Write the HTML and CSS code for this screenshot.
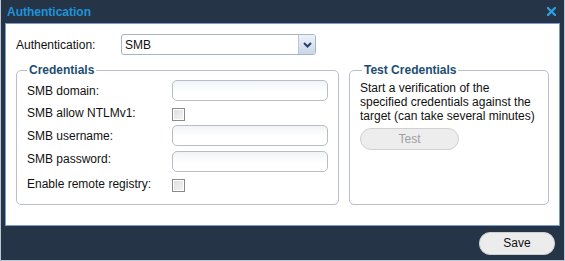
FILE: index.html
```html
<!DOCTYPE html>
<html lang="en">
<head>
    <meta charset="UTF-8">
    <title>Authentication</title>
    <link rel="stylesheet" href="styles.css">
</head>
<body>
    <div class="dialog">
        <div class="title-bar">
            <span class="title">Authentication</span>
            <svg class="close" width="9" height="9" viewBox="0 0 9 9">
                <path d="M1 1 L8 8 M8 1 L1 8" stroke="#2c9ee0" stroke-width="2.3" stroke-linecap="square"/>
            </svg>
        </div>

        <div class="content">
            <div class="auth-row">
                <span class="label">Authentication:</span>
                <div class="select">
                    <span class="select-value">SMB</span>
                    <span class="select-arrow">
                        <svg width="9" height="6" viewBox="0 0 9 6">
                            <path d="M1 1 L4.5 4.5 L8 1" stroke="#28406a" stroke-width="2" fill="none"/>
                        </svg>
                    </span>
                </div>
            </div>

            <div class="groups">
                <fieldset class="group credentials">
                    <legend>Credentials</legend>
                    <div class="form-grid">
                        <span class="label">SMB domain:</span>
                        <span class="input"></span>

                        <span class="label">SMB allow NTLMv1:</span>
                        <span class="checkbox"></span>

                        <span class="label">SMB username:</span>
                        <span class="input"></span>

                        <span class="label">SMB password:</span>
                        <span class="input"></span>

                        <span class="label">Enable remote registry:</span>
                        <span class="checkbox"></span>
                    </div>
                </fieldset>

                <fieldset class="group test">
                    <legend>Test Credentials</legend>
                    <p class="test-text">Start a verification of the specified credentials against the target (can take several minutes)</p>
                    <button class="btn btn-disabled" disabled>Test</button>
                </fieldset>
            </div>
        </div>

        <div class="footer">
            <button class="btn btn-save">Save</button>
        </div>
    </div>
</body>
</html>
```

FILE: styles.css
```css
body {
    margin: 0;
    font-family: 'Liberation Sans', Arial, sans-serif;
    font-size: 12px;
    color: #111;
}

.dialog {
    width: 565px;
    height: 261px;
    box-sizing: border-box;
    background: #253547;
    border: 1px solid #bcc6d2;
    border-top: none;
    display: flex;
    flex-direction: column;
}

.title-bar {
    height: 23px;
    display: flex;
    align-items: center;
    justify-content: space-between;
    padding: 0 8px 0 6px;
}

.title {
    font-weight: bold;
    font-size: 12px;
    color: #1e93da;
}

.close {
    display: block;
}

.content {
    background: #fff;
    border: 1px solid #7a9ccc;
    margin: 0 4px;
    height: 203px;
    box-sizing: border-box;
    padding: 10px 9px 0 10px;
}

.auth-row {
    display: flex;
    align-items: center;
    height: 21px;
}

.auth-row .label {
    width: 105px;
}

.select {
    width: 195px;
    height: 21px;
    box-sizing: border-box;
    border: 1px solid #a7b4c8;
    border-radius: 3px;
    display: flex;
    align-items: center;
    justify-content: space-between;
    background: #fff;
}

.select-value {
    padding-left: 3px;
}

.select-arrow {
    width: 16px;
    height: 19px;
    display: flex;
    align-items: center;
    justify-content: center;
    border-left: 1px solid #b8c6da;
    background: linear-gradient(#eef3f9, #c9d6e8);
    border-radius: 0 2px 2px 0;
}

.groups {
    display: flex;
    gap: 10px;
    margin-top: 8px;
}

.group {
    margin: 0;
    border: 1px solid #b9bdcc;
    border-radius: 5px;
    box-sizing: border-box;
    height: 142px;
}

.group legend {
    font-weight: bold;
    color: #1c4d72;
    padding: 0 2px;
}

.credentials {
    width: 323px;
    padding: 3px 10px 0 10px;
}

.test {
    width: 200px;
    padding: 4px 8px 0 10px;
}

.test legend {
    margin-left: 2px;
}

.form-grid {
    display: grid;
    grid-template-columns: 145px 156px;
    grid-template-rows: 21px 24px 21px 26px 24px;
    align-items: center;
}

.input {
    align-self: end;
    height: 21px;
    box-sizing: border-box;
    border: 1px solid #b8bcc9;
    border-radius: 5px;
    background: linear-gradient(#f1f4f6, #fff 60%);
}

.checkbox {
    width: 13px;
    height: 13px;
    box-sizing: border-box;
    border: 1px solid #8a8a8a;
    background: linear-gradient(135deg, #dcdcdc, #f6f6f6);
    box-shadow: inset 0 0 0 1px #fff;
    margin-top: 3px;
}

.test-text {
    margin: 0;
    line-height: 14px;
}

.btn {
    font-family: inherit;
    font-size: 12px;
    border-radius: 11px;
    box-sizing: border-box;
    cursor: pointer;
}

.btn-disabled {
    margin-top: 5px;
    width: 99px;
    height: 22px;
    background: #ededed;
    border: 1px solid #d0d0d0;
    color: #a0a0a0;
}

.footer {
    flex: 1;
    display: flex;
    align-items: center;
    justify-content: flex-end;
    padding-right: 9px;
}

.btn-save {
    width: 76px;
    height: 23px;
    background: #ececec;
    border: 1px solid #cfcfcf;
    color: #111;
}
```
